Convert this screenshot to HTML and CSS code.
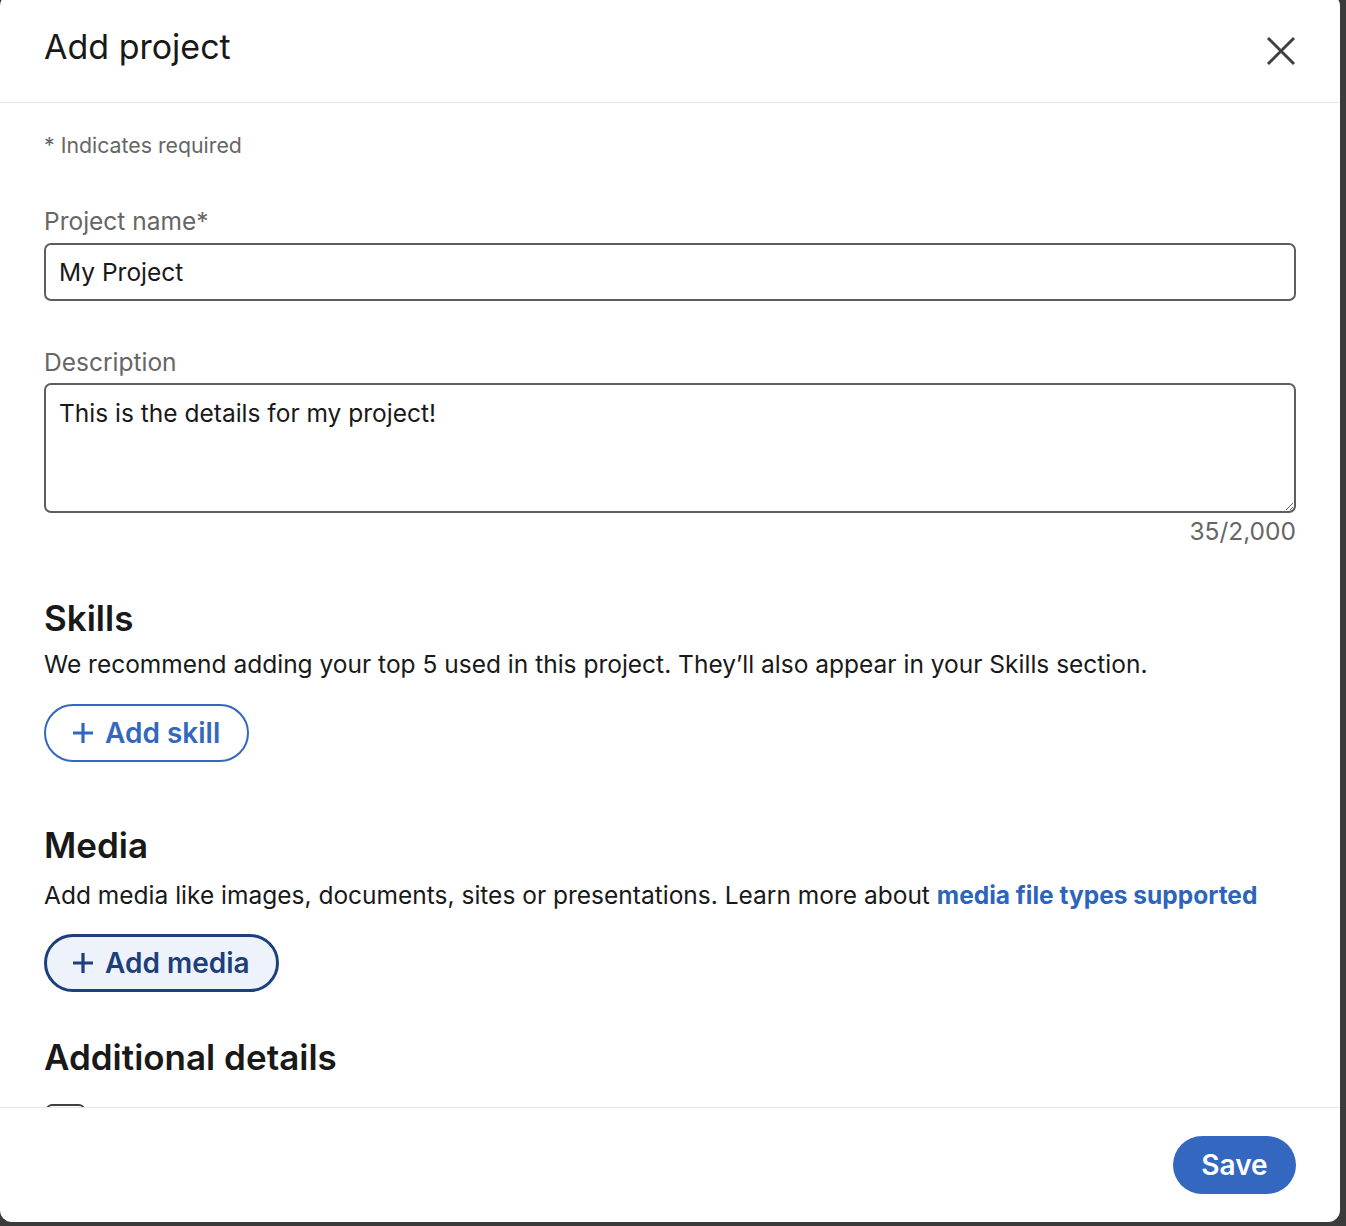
FILE: index.html
```html
<!DOCTYPE html>
<html lang="en">
<head>
<meta charset="utf-8">
<title>Add project</title>
<link rel="stylesheet" href="styles.css">
</head>
<body>
<div class="modal">
  <header class="modal-header">
    <h1 class="modal-title">Add project</h1>
    <button class="close-btn" aria-label="Dismiss">
      <svg width="30" height="30" viewBox="0 0 30 30"><path d="M2 2 L28 28 M28 2 L2 28" stroke="#404040" stroke-width="3" fill="none"/></svg>
    </button>
  </header>
  <div class="modal-body">
    <p class="required-note">* Indicates required</p>

    <label class="field-label" for="pname">Project name*</label>
    <input id="pname" class="text-input" type="text" value="My Project">

    <label class="field-label label-desc" for="pdesc">Description</label>
    <textarea id="pdesc" class="text-area">This is the details for my project!</textarea>
    <div class="counter">35/2,000</div>

    <h2 class="section-title">Skills</h2>
    <p class="section-desc">We recommend adding your top 5 used in this project. They’ll also appear in your Skills section.</p>
    <button class="pill-btn skill-btn">
      <svg class="plus" width="22" height="22" viewBox="0 0 22 22"><path d="M11 1 V21 M1 11 H21" stroke="currentColor" stroke-width="3.2" fill="none"/></svg>
      <span>Add skill</span>
    </button>

    <h2 class="section-title media-title">Media</h2>
    <p class="section-desc media-desc">Add media like images, documents, sites or presentations. Learn more about <a class="link" href="#">media file types supported</a></p>
    <button class="pill-btn media-btn">
      <svg class="plus" width="22" height="22" viewBox="0 0 22 22"><path d="M11 1 V21 M1 11 H21" stroke="currentColor" stroke-width="3.2" fill="none"/></svg>
      <span>Add media</span>
    </button>

    <h2 class="section-title details-title">Additional details</h2>
    <div class="checkbox"></div>
  </div>
  <footer class="modal-footer">
    <button class="save-btn">Save</button>
  </footer>
</div>
</body>
</html>
```

FILE: styles.css
```css
html, body {
  margin: 0;
  padding: 0;
}
body {
  background: #3b3b3b;
  font-family: Inter, "Noto Sans", "Liberation Sans", sans-serif;
  color: #191919;
  height: 1226px;
  overflow: hidden;
}
.modal {
  width: 1340px;
  height: 1228px;
  margin-top: -6px;
  background: #ffffff;
  border-radius: 12px;
  display: flex;
  flex-direction: column;
  overflow: hidden;
}
.modal-header {
  height: 109px;
  box-sizing: border-box;
  border-bottom: 1px solid #e6e6e6;
  display: flex;
  justify-content: space-between;
  align-items: flex-start;
  padding: 0 35px 0 44px;
  flex: none;
}
.modal-title {
  margin: 31px 0 0 0;
  font-size: 34px;
  line-height: 44px;
  font-weight: 400;
  color: #191919;
}
.close-btn {
  margin-top: 33px;
  width: 48px;
  height: 48px;
  border: none;
  background: transparent;
  padding: 0;
  display: flex;
  align-items: center;
  justify-content: center;
}
.modal-body {
  flex: 1;
  overflow: hidden;
  padding: 28px 44px 0 44px;
  display: flex;
  flex-direction: column;
  align-items: flex-start;
}
.modal-body > * {
  flex: none;
}
.required-note {
  margin: 0;
  font-size: 21.3px;
  line-height: 28px;
  color: #666666;
}
.field-label {
  display: block;
  margin-top: 47px;
  font-size: 24.5px;
  line-height: 30px;
  color: #666666;
}
.label-desc {
  margin-top: 46px;
}
.text-input {
  margin-top: 7px;
  width: 100%;
  height: 58px;
  box-sizing: border-box;
  border: 2px solid #5e5e5e;
  border-radius: 7px;
  padding: 0 13px;
  font-family: inherit;
  font-size: 24.5px;
  color: #191919;
  outline: none;
}
.text-area {
  margin-top: 6px;
  width: 100%;
  height: 130px;
  box-sizing: border-box;
  border: 2px solid #5e5e5e;
  border-radius: 7px;
  padding: 13px 13px;
  font-family: inherit;
  font-size: 24.5px;
  line-height: 30px;
  color: #191919;
  resize: vertical;
  outline: none;
}
.counter {
  align-self: stretch;
  text-align: right;
  margin-top: 3px;
  font-size: 24.5px;
  line-height: 30px;
  color: #666666;
}
.section-title {
  margin: 50px 0 0 0;
  font-size: 35px;
  line-height: 44px;
  font-weight: 600;
  color: #191919;
}
.section-desc {
  margin: 9px 0 0 0;
  font-size: 24.5px;
  line-height: 30px;
  color: #191919;
}
.media-title {
  margin-top: 61px;
}
.media-desc {
  margin-top: 13px;
}
.link {
  color: #2d64bc;
  font-weight: 700;
  text-decoration: none;
}
.pill-btn {
  margin-top: 25px;
  height: 58px;
  box-sizing: border-box;
  border-radius: 29px;
  display: flex;
  align-items: center;
  gap: 11px;
  padding: 0 27px 0 26px;
  font-family: inherit;
  font-size: 28px;
  font-weight: 600;
  background: #ffffff;
}
.skill-btn {
  border: 2px solid #3468c0;
  color: #3468c0;
}
.media-btn {
  margin-top: 24px;
  border: 3px solid #1d3f7c;
  color: #1d3f7c;
  background: #eef3fb;
  padding: 0 26px 0 25px;
}
.plus {
  flex: none;
}
.details-title {
  margin-top: 43px;
}
.checkbox {
  margin: 25px 0 0 2px;
  width: 39px;
  height: 39px;
  box-sizing: border-box;
  border: 2px solid #404040;
  border-radius: 6px;
}
.modal-footer {
  flex: none;
  height: 115px;
  box-sizing: border-box;
  border-top: 1px solid #e6e6e6;
  display: flex;
  justify-content: flex-end;
  align-items: flex-start;
  padding: 28px 44px 0 44px;
}
.save-btn {
  height: 58px;
  width: 123px;
  border: none;
  border-radius: 29px;
  background: #3468c0;
  color: #ffffff;
  font-family: inherit;
  font-size: 28px;
  font-weight: 600;
}
```
